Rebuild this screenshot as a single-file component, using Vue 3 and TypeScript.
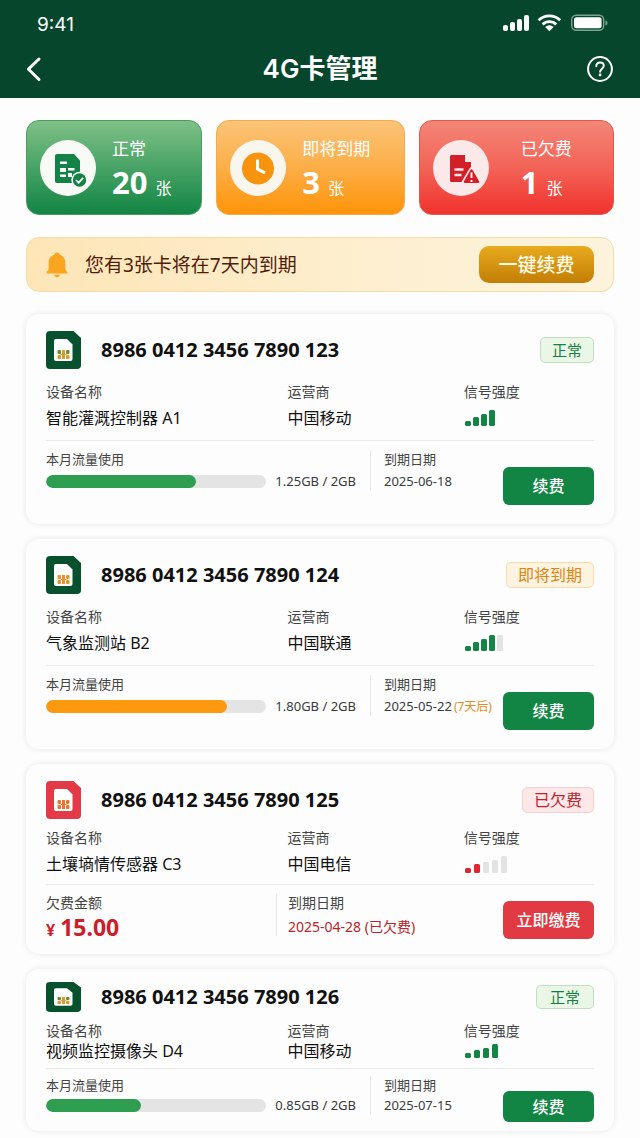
<script setup lang="ts">
type Status = 'ok' | 'soon' | 'due'
type Density = 'regular' | 'medium' | 'compact'

interface SimCard {
  iccid: string
  device: string
  carrier: string
  status: Status
  density: Density
  bars: number[]
  activeBars: number
  barPitch: number
  date: string
  dateNote?: string
  usage?: { text: string; percent: number }
  debt?: string
}

const badgeText: Record<Status, string> = { ok: '正常', soon: '即将到期', due: '已欠费' }

const cards: SimCard[] = [
  {
    iccid: '8986 0412 3456 7890 123', device: '智能灌溉控制器 A1', carrier: '中国移动',
    status: 'ok', density: 'regular', bars: [5, 9, 12, 16], activeBars: 4, barPitch: 8,
    date: '2025-06-18', usage: { text: '1.25GB / 2GB', percent: 68 },
  },
  {
    iccid: '8986 0412 3456 7890 124', device: '气象监测站 B2', carrier: '中国联通',
    status: 'soon', density: 'regular', bars: [5, 9, 12, 16, 16], activeBars: 4, barPitch: 8,
    date: '2025-05-22', dateNote: '(7天后)', usage: { text: '1.80GB / 2GB', percent: 82 },
  },
  {
    iccid: '8986 0412 3456 7890 125', device: '土壤墒情传感器 C3', carrier: '中国电信',
    status: 'due', density: 'medium', bars: [5, 9, 11, 13, 17], activeBars: 2, barPitch: 9,
    date: '2025-04-28 (已欠费)', debt: '15.00',
  },
  {
    iccid: '8986 0412 3456 7890 126', device: '视频监控摄像头 D4', carrier: '中国移动',
    status: 'ok', density: 'compact', bars: [5, 8, 10, 14], activeBars: 4, barPitch: 9,
    date: '2025-07-15', usage: { text: '0.85GB / 2GB', percent: 43 },
  },
]

const peak = (bars: number[]): number => Math.max(...bars)
</script>

<template>
  <div class="page">
    <header class="top">
      <div class="status-bar">
        <span class="clock">9:41</span>
        <svg class="status-icons" width="105" height="18" viewBox="0 0 105 18" fill="#fff" aria-hidden="true">
          <rect x="0" y="11" width="5" height="6" rx="2" />
          <rect x="7" y="8" width="5" height="9" rx="2" />
          <rect x="14" y="5" width="5" height="12" rx="2" />
          <rect x="21" y="1" width="5" height="16" rx="2" />
          <g fill="none" stroke="#fff" stroke-width="2.8">
            <path d="M35.6 6.2a15.5 15.5 0 0 1 21.6 0" />
            <path d="M39.6 10.4a9.8 9.8 0 0 1 13.6 0" />
          </g>
          <path d="M42.2 13a6 6 0 0 1 8.4 0l-4.2 4.2z" />
          <rect x="68.7" y="1.200" width="32" height="15" rx="4.500" fill="none" stroke="#7fa392" stroke-width="1.400" />
          <rect x="71" y="3.200" width="27.600" height="11" rx="2.500" />
          <path d="M102.500 6.200c2.600.8 2.600 4.600 0 5.400z" fill="#7fa392" />
        </svg>
      </div>
      <div class="title-bar">
        <button class="icon-button" type="button" aria-label="返回">
          <svg width="16" height="26" viewBox="0 0 16 26" fill="none" stroke="#fff" stroke-width="3" stroke-linecap="round" stroke-linejoin="round"><path d="M13 3 2.500 13.200 13 23.500" /></svg>
        </button>
        <h1>4G卡管理</h1>
        <button class="icon-button" type="button" aria-label="帮助">
          <svg width="28" height="28" viewBox="0 0 28 28" fill="none" stroke="#fff" stroke-linecap="round">
            <circle cx="14" cy="14" r="11.900" stroke-width="2" />
            <path d="M10.300 11.200c0-2.300 1.600-3.800 3.800-3.800s3.700 1.400 3.700 3.400c0 2.800-3.700 3-3.700 6" stroke-width="2" />
            <circle cx="14.100" cy="20" r="1.400" fill="#fff" stroke="none" />
          </svg>
        </button>
      </div>
    </header>

    <main>
      <section class="stats">
        <div class="stat stat-ok">
          <svg class="disc" viewBox="0 0 56 56" aria-hidden="true">
            <circle cx="28" cy="28" r="28" fill="#f7faf5" />
            <path d="M17 14h17l6 6.500V41a2 2 0 0 1-2 2H17a2 2 0 0 1-2-2V16a2 2 0 0 1 2-2z" fill="#128246" />
            <g fill="#fff">
              <rect x="20" y="21.500" width="7" height="2.500" />
              <rect x="20" y="28" width="6" height="4" /><rect x="28" y="28" width="6.500" height="2.500" />
              <rect x="20" y="34.500" width="6" height="2.500" /><rect x="28" y="33" width="4" height="4" />
            </g>
            <circle cx="39.500" cy="40" r="8.200" fill="#f7faf5" />
            <circle cx="39.500" cy="40" r="6.700" fill="#128246" />
            <path d="m36 40 2.600 2.700 4.600-4.800" fill="none" stroke="#fff" stroke-width="1.700" />
          </svg>
          <div class="stat-text"><p>正常</p><p><strong>20</strong><span>张</span></p></div>
        </div>
        <div class="stat stat-soon">
          <svg class="disc" viewBox="0 0 56 56" aria-hidden="true">
            <circle cx="28" cy="28" r="28" fill="#f9f6ee" />
            <circle cx="28" cy="28.500" r="16" fill="#f7930d" />
            <path d="M27.500 19.500v9.500l7.500 3.800" fill="none" stroke="#fff" stroke-width="3" />
          </svg>
          <div class="stat-text"><p>即将到期</p><p><strong>3</strong><span>张</span></p></div>
        </div>
        <div class="stat stat-due">
          <svg class="disc" viewBox="0 0 56 56" aria-hidden="true">
            <circle cx="28" cy="28" r="28" fill="#fbe9e9" />
            <path d="M18.500 15H32v7h6v20H18.500a1.500 1.500 0 0 1-1.500-1.500v-24a1.500 1.500 0 0 1 1.500-1.500z" fill="#d31f27" />
            <path d="M21.500 29.500h9M21.500 35h7" stroke="#fbe9e9" stroke-width="2.500" />
            <path d="M38.500 30 46 42.500H31z" fill="#fbe9e9" stroke="#fbe9e9" stroke-width="5" stroke-linejoin="round" />
            <path d="M38.500 30.500 45 41.800H32z" fill="#d31f27" stroke="#d31f27" stroke-width="2.500" stroke-linejoin="round" />
            <path d="M38.500 32.500v5.500M38.500 40v2" stroke="#fff" stroke-width="1.900" />
          </svg>
          <div class="stat-text"><p>已欠费</p><p><strong>1</strong><span>张</span></p></div>
        </div>
      </section>

      <section class="notice">
        <svg width="22" height="26" viewBox="0 0 22 26" fill="#faa51f" aria-hidden="true">
          <path d="M11 .5c-1.500 0-2.500.9-2.700 2.200C4.700 3.800 2.700 6.800 2.700 10.500V16c0 1.500-.7 2.600-1.700 3.400-.8.700-.5 2.100.7 2.100h18.600c1.200 0 1.500-1.400.7-2.100-1-.8-1.700-1.900-1.700-3.400v-5.500c0-3.700-2-6.700-5.600-7.800C13.500 1.400 12.500.5 11 .5z" />
          <path d="M8 22.800h6c-.3 1.500-1.500 2.400-3 2.400s-2.700-.9-3-2.400z" />
        </svg>
        <p>您有3张卡将在7天内到期</p>
        <button class="renew-all" type="button">一键续费</button>
      </section>

      <article v-for="card in cards" :key="card.iccid" class="card" :class="[card.density, card.status]">
        <div class="card-head">
          <svg class="sim" viewBox="0 0 35 38" preserveAspectRatio="none" aria-hidden="true">
            <path class="sim-body" d="M4 0h23.500L35 7v27a4 4 0 0 1-4 4H4a4 4 0 0 1-4-4V4a4 4 0 0 1 4-4z" />
            <path d="M10 8h11l5.500 5.500V28a2 2 0 0 1-2 2H10a2 2 0 0 1-2-2V10a2 2 0 0 1 2-2z" fill="#fff" />
            <g class="chip-side"><rect x="11.500" y="19" width="3.500" height="4" rx="1" /><rect x="20" y="19" width="3.500" height="4" rx="1" /></g>
            <g class="chip"><rect x="11.500" y="24" width="3.500" height="4" rx="1" /><rect x="20" y="24" width="3.500" height="4" rx="1" /><rect x="16" y="19" width="3" height="9" /><rect x="14.500" y="23" width="6" height="1" /></g>
          </svg>
          <h2>{{ card.iccid }}</h2>
          <span class="badge">{{ badgeText[card.status] }}</span>
        </div>

        <dl class="info">
          <div><dt>设备名称</dt><dd>{{ card.device }}</dd></div>
          <div><dt>运营商</dt><dd>{{ card.carrier }}</dd></div>
          <div>
            <dt>信号强度</dt>
            <dd class="signal">
              <svg :width="card.barPitch * card.bars.length" :height="peak(card.bars)" role="img" :aria-label="`${card.activeBars} 格`">
                <rect
                  v-for="(h, i) in card.bars" :key="i" :class="{ lit: i < card.activeBars }"
                  :x="1 + i * card.barPitch" :y="peak(card.bars) - h" width="6" :height="h" rx="1.500"
                />
              </svg>
            </dd>
          </div>
        </dl>

        <div class="card-foot">
          <div v-if="card.usage" class="usage">
            <p class="label">本月流量使用</p>
            <div class="usage-row">
              <div class="track" role="progressbar" aria-label="本月流量使用" :aria-valuenow="card.usage.percent" aria-valuemin="0" aria-valuemax="100">
                <div class="fill" :style="{ width: card.usage.percent + '%' }"></div>
              </div>
              <span>{{ card.usage.text }}</span>
            </div>
          </div>
          <div v-else class="debt">
            <p class="label">欠费金额</p>
            <p class="amount"><small>¥</small>{{ card.debt }}</p>
          </div>
          <div class="expiry">
            <p class="label">到期日期</p>
            <p class="date">{{ card.date }}<em v-if="card.dateNote">{{ card.dateNote }}</em></p>
          </div>
          <button class="pay" type="button">{{ card.status === 'due' ? '立即缴费' : '续费' }}</button>
        </div>
      </article>
    </main>
  </div>
</template>

<style>
body {
  background: #fdfdfd;
}
</style>

<style scoped>
.page {
  font-family: "Noto Sans", "Noto Sans CJK SC", sans-serif;
  color: #111;
  padding-bottom: 7px;
}
h1, h2, p, dl, dd {
  margin: 0;
}
button {
  border: 0;
  padding: 0;
  font-family: inherit;
  cursor: pointer;
  white-space: nowrap;
}
.top {
  background: #05462c;
  color: #fff;
  padding: 12px 26px 3px;
}
.status-bar {
  display: flex;
  justify-content: space-between;
  align-items: center;
  height: 26px;
  padding: 0 6px 0 11px;
}
.clock {
  font: 400 19px/26px Inter, sans-serif;
}
.status-icons {
  margin-bottom: 4px;
}
.title-bar {
  display: flex;
  justify-content: space-between;
  align-items: center;
  height: 52px;
  margin-top: 5px;
}
h1 {
  font: 600 26px/52px Inter, "Noto Sans CJK SC", sans-serif;
}
.icon-button {
  display: flex;
  align-items: center;
  width: 28px;
  height: 36px;
  background: none;
}
main {
  padding: 22px 26px 0;
}
.stats {
  display: grid;
  grid-template-columns: 176fr 188fr 195fr;
  gap: 14px;
}
.stat {
  display: flex;
  align-items: center;
  gap: 16px;
  height: 95px;
  box-sizing: border-box;
  padding: 0 13px;
  border: 1px solid;
  border-radius: 13px;
  color: #fff;
}
.stat-ok {
  background: linear-gradient(#7fc088, #4da669 45%, #128544);
  border-color: #4a9c62;
}
.stat-soon {
  background: linear-gradient(#fbc477, #fcae48 50%, #ff9408);
  border-color: #f2aa4d;
}
.stat-due {
  gap: 32px;
  background: linear-gradient(#f38678, #f36357 50%, #f0332d);
  border-color: #df584d;
}
.disc {
  width: 56px;
  height: 56px;
  flex: none;
}
.stat-text {
  padding-top: 8px;
  line-height: 24px;
  font-size: 17px;
  white-space: nowrap;
}
.stat-text p + p {
  display: flex;
  align-items: baseline;
  gap: 8px;
  margin-top: 3px;
  font-size: 16px;
  line-height: 36px;
}
.stat-text strong {
  font-size: 31px;
  font-weight: 700;
}
.notice {
  display: flex;
  align-items: center;
  height: 55px;
  box-sizing: border-box;
  margin: 22px 0;
  padding: 0 19px;
  border: 1px solid #f6dca4;
  border-radius: 13px;
  background: linear-gradient(90deg, #fde5b6, #fdefd0 60%, #fdf3dc);
}
.notice p {
  flex: 1;
  margin-left: 17px;
  color: #501c0c;
  font-size: 19px;
  line-height: 28px;
}
.renew-all {
  width: 115px;
  height: 37px;
  border-radius: 10px;
  background: linear-gradient(#e8ab1e, #c27e05);
  color: #fffbe8;
  font-size: 19px;
  font-weight: 500;
  line-height: 28px;
}

.card {
  --top: 17px;
  --icon: 38px;
  --head-gap: 14px;
  --label-gap: 6px;
  --value: 22px;
  --info-gap: 11px;
  --foot-top: 9px;
  --row-gap: 4px;
  --pay-gap: 17px;
  --pay: 38px;
  --bottom: 19px;
  --main: #128544;
  --fill: #2f9e50;
  --sim: #07512f;
  padding: var(--top) 20px var(--bottom);
  margin-bottom: 15px;
  border-radius: 13px;
  background: #fdfdfd;
  box-shadow: 0 0 6px rgba(0, 0, 0, 0.09);
}
.card:last-child {
  margin-bottom: 0;
}
.medium {
  --head-gap: 10px;
  --info-gap: 9px;
  --row-gap: 6px;
  --pay-gap: 7px;
  --bottom: 15px;
}
.compact {
  --top: 13px;
  --icon: 30px;
  --head-gap: 10px;
  --label-gap: 1px;
  --value: 20px;
  --info-gap: 7px;
  --foot-top: 7px;
  --row-gap: 2px;
  --pay-gap: 15px;
  --pay: 31px;
  --bottom: 9px;
}
.soon {
  --fill: #fd990f;
}
.due {
  --main: #e23a42;
  --sim: #e23a46;
}
.card-head {
  display: flex;
  align-items: center;
  height: var(--icon);
}
.sim {
  width: 35px;
  height: var(--icon);
}
.sim-body {
  fill: var(--sim);
}
.chip {
  fill: #dc9a2a;
}
.chip-side {
  fill: #6f8a35;
}
.soon .chip-side {
  fill: #dc9a2a;
}
.due .chip, .due .chip-side {
  fill: #e5772c;
}
h2 {
  flex: 1;
  margin-left: 20px;
  font-size: 20px;
  font-weight: 700;
  line-height: 28px;
}
.badge {
  padding: 0 11px;
  border: 1px solid #bfe0bf;
  border-radius: 5px;
  background: #ebf7e6;
  color: #157f43;
  font-size: 15px;
  line-height: 24px;
}
.compact .badge {
  padding: 0 13px;
  line-height: 22px;
}
.soon .badge {
  border-color: #f8dcae;
  background: #fdf3e1;
  color: #dd850f;
  font-size: 16px;
}
.due .badge {
  border-color: #f6cfd0;
  background: #fde7e8;
  color: #b8252b;
  font-size: 16px;
}
.info {
  display: grid;
  grid-template-columns: 241fr 176fr 130fr;
  margin-top: var(--head-gap);
  padding-bottom: var(--info-gap);
  border-bottom: 1px solid #ebebeb;
}
dt {
  color: #444;
  font-size: 14px;
  line-height: 18px;
}
dd {
  margin-top: var(--label-gap);
  font-size: 16px;
  line-height: var(--value);
}
.signal {
  display: flex;
  align-items: center;
  height: var(--value);
}
.signal rect {
  fill: #e3e3e3;
}
.signal .lit {
  fill: var(--lit, #128544);
}
.due .signal {
  --lit: #da2a2f;
}
.card-foot {
  display: flex;
  align-items: flex-start;
  padding-top: var(--foot-top);
}
.label {
  color: #444;
  font-size: 13px;
  line-height: 18px;
}
.usage {
  flex: 1;
}
.usage-row {
  display: flex;
  align-items: center;
  gap: 9px;
  height: 18px;
  margin-top: var(--row-gap);
  padding-right: 14px;
  color: #3a3a3a;
  font-size: 13px;
  white-space: nowrap;
}
.track {
  flex: 1;
  height: 13px;
  border-radius: 7px;
  overflow: hidden;
  background: #e4e4e4;
}
.fill {
  height: 100%;
  border-radius: 7px;
  background: var(--fill);
}
.expiry {
  width: 119px;
  padding-left: 13px;
  border-left: 1px solid #e8e8e8;
}
.date {
  margin-top: var(--row-gap);
  color: #3a3a3a;
  font-size: 13px;
  line-height: 18px;
  white-space: nowrap;
}
.date em {
  margin-left: 2px;
  color: #e08d1c;
  font-size: 12px;
  font-style: normal;
}
.debt {
  flex: 1;
}
.due .label {
  font-size: 14px;
}
.due .expiry {
  width: 215px;
  padding-left: 11px;
}
.due .date {
  color: #b8252b;
  font-size: 14px;
}
.amount {
  margin-top: var(--row-gap);
  color: #c9202a;
  font-size: 23px;
  font-weight: 700;
  line-height: 18px;
}
.amount small {
  margin-right: 5px;
  font-size: 16px;
}
.pay {
  width: 91px;
  height: var(--pay);
  margin-top: var(--pay-gap);
  border-radius: 6px;
  background: var(--main);
  color: #fff;
  font-size: 16px;
  font-weight: 500;
  line-height: 24px;
}
</style>
